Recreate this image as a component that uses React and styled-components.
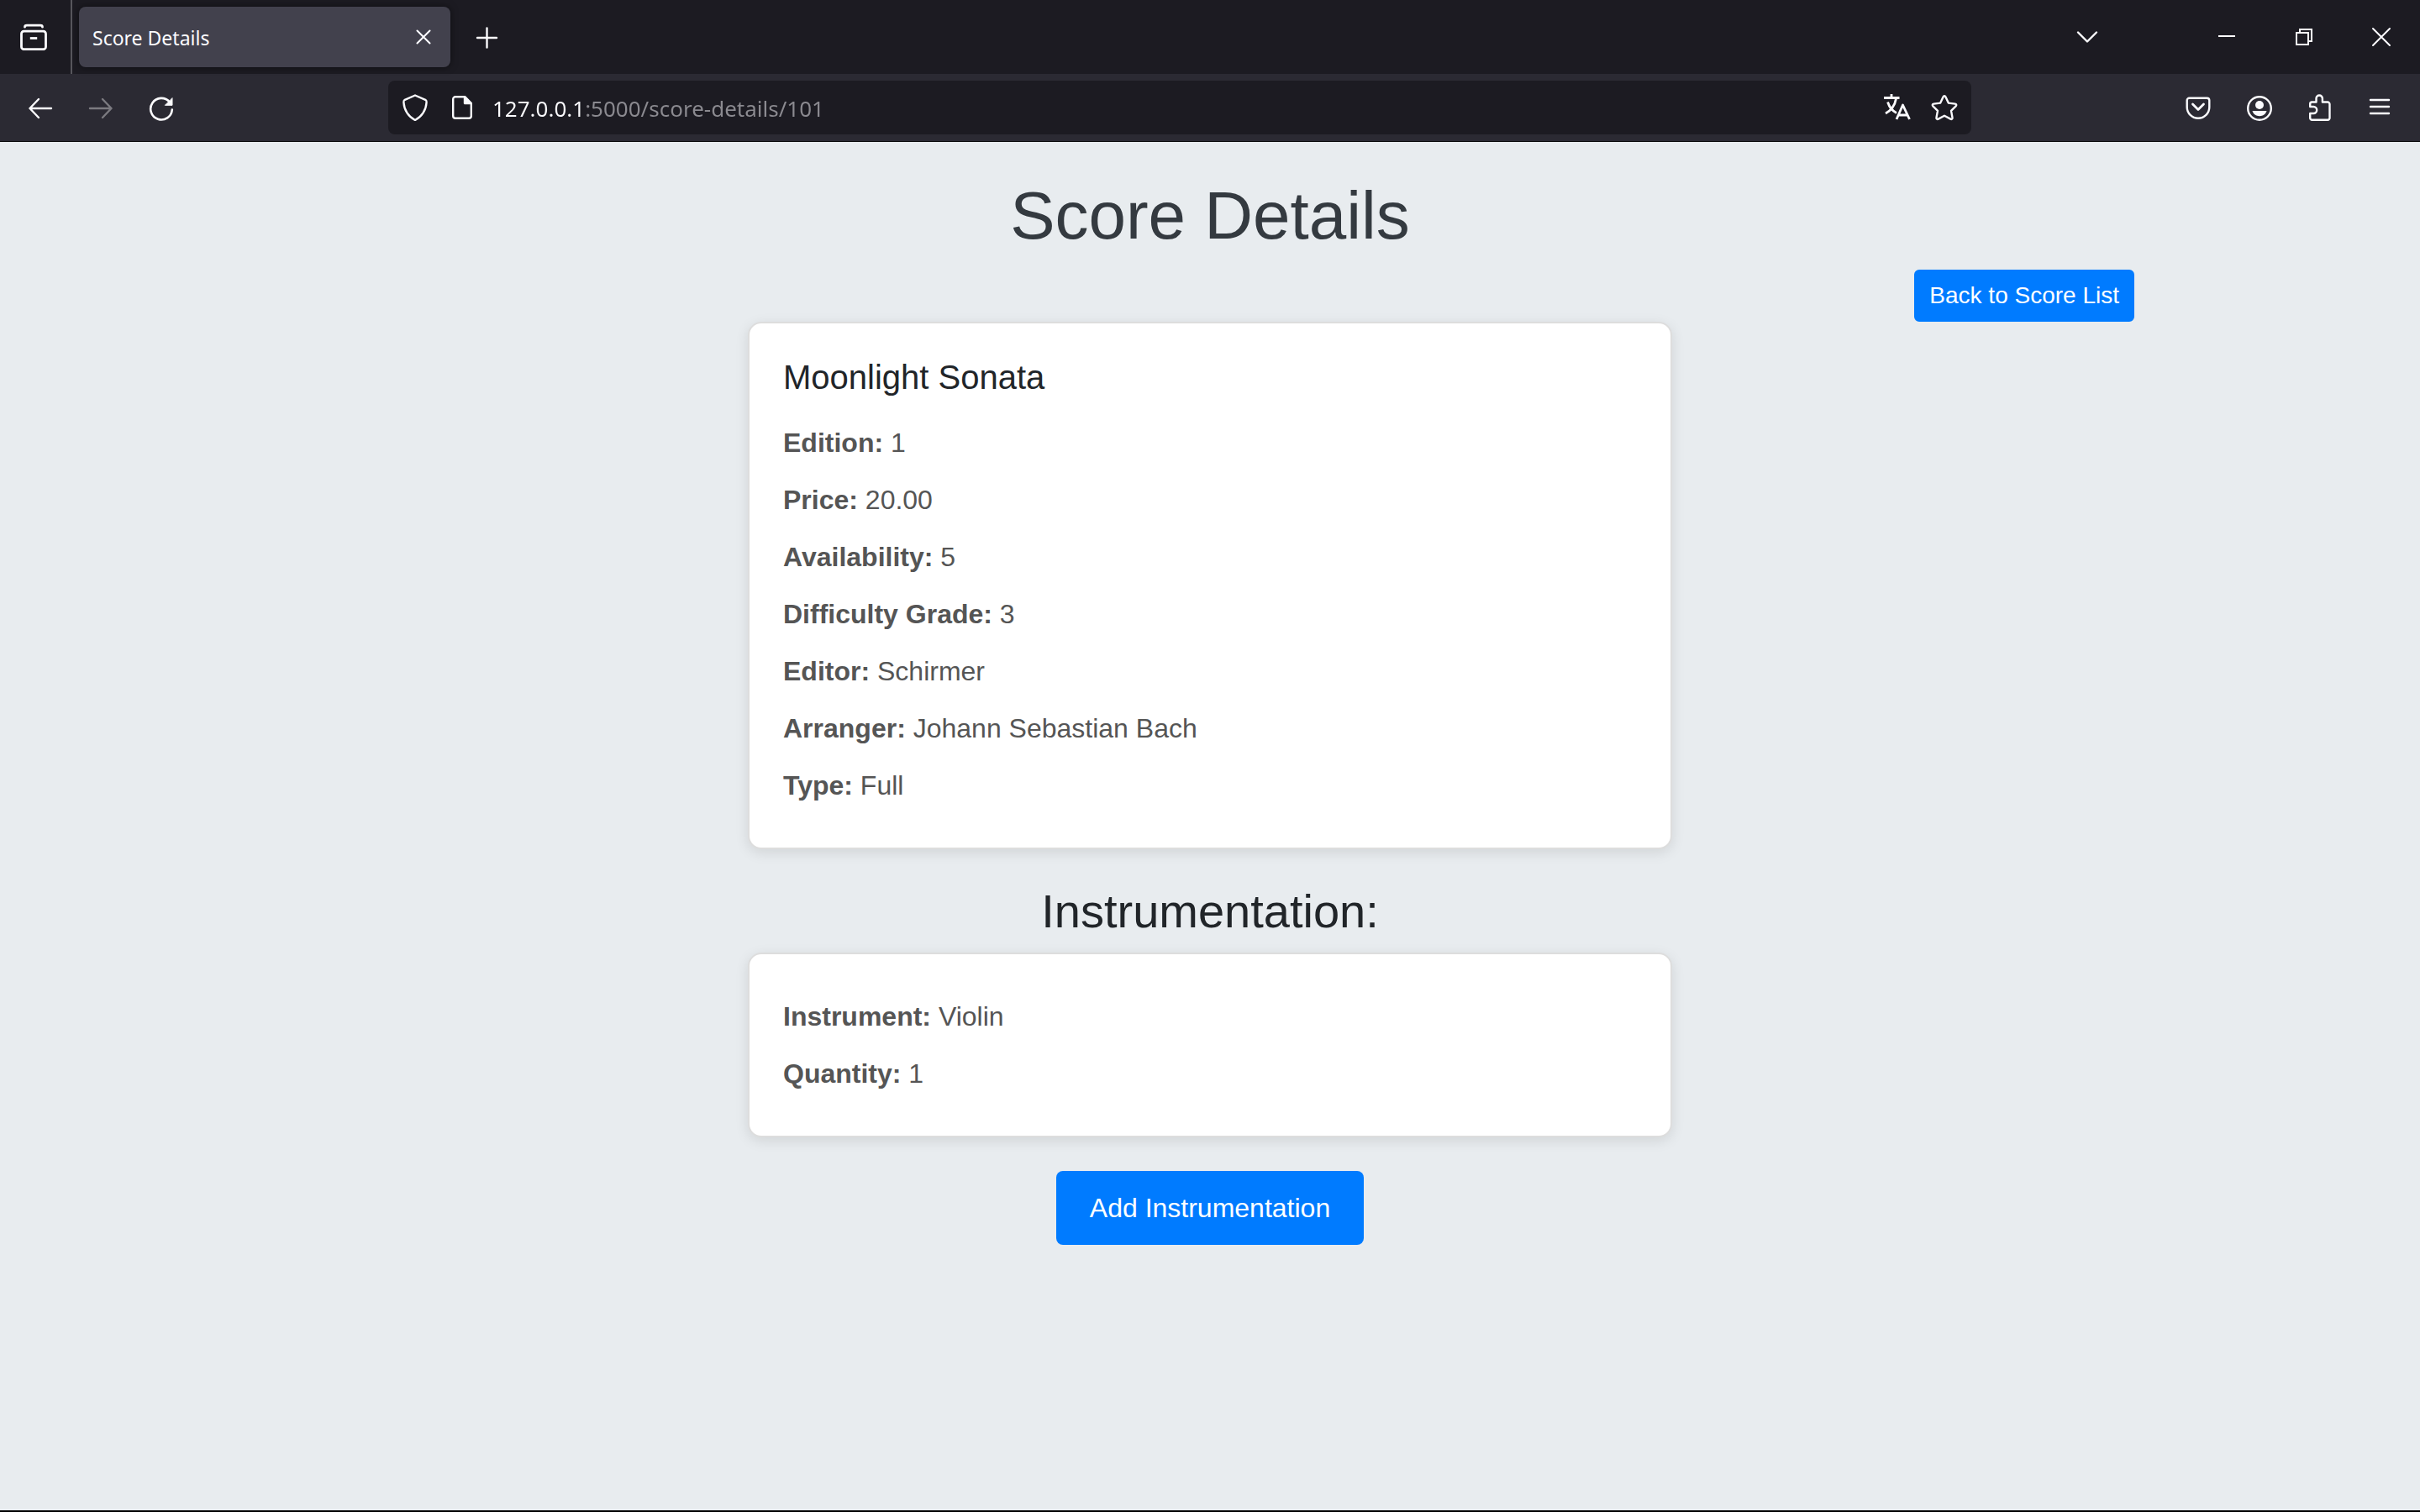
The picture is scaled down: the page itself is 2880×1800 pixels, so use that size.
import React from "react";
import styled, { createGlobalStyle } from "styled-components";

const GlobalStyle = createGlobalStyle`
  *, *::before, *::after { box-sizing: border-box; }
  body {
    margin: 0;
    background: #e8ecef;
    color: #212529;
    font-family: "Liberation Sans", Arial, sans-serif;
    font-size: 32px;
    line-height: 48px;
  }
`;

const Window = styled.div`
  display: flex;
  flex-direction: column;
  min-height: 100vh;
  border-bottom: 2px solid #000;
`;

/* Browser chrome */

const Chrome = styled.header`
  color: #fbfbfe;
  background: #2b2a33;
  border-bottom: 1px solid #0c0c0d;
  font-family: "Noto Sans", "Open Sans", sans-serif;
`;

const TabBar = styled.div`
  display: flex;
  align-items: center;
  height: 88px;
  background: #1c1b22;
`;

const IconButton = styled.button`
  display: flex;
  align-items: center;
  justify-content: center;
  flex: none;
  width: ${(p) => p.$width || 72}px;
  height: ${(p) => p.$height || 64}px;
  padding: 0;
  border: 0;
  background: none;
  color: ${(p) => (p.disabled ? "#7b7a80" : "inherit")};
`;

const FirefoxView = styled.div`
  display: flex;
  align-items: center;
  align-self: stretch;
  padding: 0 8px 0 4px;
  border-right: 2px solid #57565c;
`;

const Tab = styled.div`
  display: flex;
  align-items: center;
  justify-content: space-between;
  width: 442px;
  height: 72px;
  margin: 0 8px;
  padding: 0 16px;
  border-radius: 8px;
  background: #42414d;
  box-shadow: 0 0 8px rgba(0, 0, 0, 0.5);
`;

const TabTitle = styled.span`
  padding-top: 2px;
  font-size: 23px;
  line-height: 32px;
`;

const WindowControls = styled.div`
  display: flex;
  gap: 84px;
  margin-left: auto;
`;

const Controls = styled.div`
  display: flex;
`;

const NavBar = styled.nav`
  display: flex;
  align-items: center;
  height: 80px;
  padding: 0 12px;
`;

const NavGroup = styled.div`
  display: flex;
  flex: none;
`;

const AddressBar = styled.div`
  display: flex;
  align-items: center;
  flex: 1;
  gap: 20px;
  height: 64px;
  margin: 0 234px;
  padding: 0 16px;
  border-radius: 8px;
  background: #1c1b22;
`;

const AddressIcons = styled.div`
  display: flex;
  flex: none;
  gap: 24px;
`;

const AddressInput = styled.input`
  flex: 1;
  min-width: 0;
  height: 42px;
  padding: 2px 0 0;
  border: 0;
  outline: 0;
  font: inherit;
  font-size: 26px;
  line-height: 40px;
  color: transparent;
  background: linear-gradient(to right, #fbfbfe 107px, #8b8a90 107px);
  background-clip: text;
  -webkit-background-clip: text;
`;

const Svg = styled.svg`
  display: block;
  flex: none;
  fill: none;
  stroke: currentColor;
  stroke-width: ${(p) => p.$stroke || 2.4};
  stroke-linecap: round;
  stroke-linejoin: round;
`;

const Icon = ({ stroke, children }) => (
  <Svg width="32" height="32" viewBox="0 0 32 32" $stroke={stroke} aria-hidden="true">
    {children}
  </Svg>
);

/* Page */

const Page = styled.main`
  display: flex;
  flex-direction: column;
  align-items: center;
  width: 100%;
  max-width: 2280px;
  margin: 0 auto;
  padding: 40px;
`;

const PageTitle = styled.h1`
  margin: 0 0 16px;
  color: #343a40;
  font-size: 80px;
  font-weight: 400;
  line-height: 96px;
`;

const SectionTitle = styled.h2`
  margin: 40px 0 16px;
  font-size: 56px;
  font-weight: 400;
  line-height: 67px;
`;

const Card = styled.section`
  width: 50%;
  padding: 40px;
  border: 2px solid #ddd;
  border-radius: 16px;
  background: #fff;
  box-shadow: 0 4px 16px rgba(0, 0, 0, 0.1);
`;

const CardTitle = styled.h2`
  margin: 0 0 20px;
  font-size: 40px;
  font-weight: 400;
  line-height: 48px;
`;

const Detail = styled.p`
  margin: 0;
  padding: 10px 0;
  color: #555;
`;

const BackLink = styled.a`
  align-self: flex-end;
  padding: 8px 16px;
  border: 2px solid #007bff;
  border-radius: 6px;
  background: #007bff;
  color: #fff;
  font-size: 28px;
  line-height: 42px;
  text-decoration: none;
`;

const AddButton = styled.button`
  margin-top: 40px;
  padding: 20px 40px;
  border: 0;
  border-radius: 8px;
  background: #007bff;
  color: #fff;
  font: inherit;
`;

const scoreDetails = [
  ["Edition", "1"],
  ["Price", "20.00"],
  ["Availability", "5"],
  ["Difficulty Grade", "3"],
  ["Editor", "Schirmer"],
  ["Arranger", "Johann Sebastian Bach"],
  ["Type", "Full"],
];

const instrumentation = [
  ["Instrument", "Violin"],
  ["Quantity", "1"],
];

const Details = ({ items }) =>
  items.map(([label, value]) => (
    <Detail key={label}>
      <strong>{label}:</strong> {value}
    </Detail>
  ));

export default function App() {
  return (
    <Window>
      <GlobalStyle />
      <Chrome>
        <TabBar>
          <FirefoxView>
            <IconButton aria-label="Recent browsing">
              <Icon stroke={2.8}>
                <path d="M5.5 4.2C5.5 2.6 6.6 2.2 8 2.2h16c1.400 0 2.500 .4 2.500 2" />
                <rect x="1.500" y="9.200" width="29" height="21.500" rx="3" />
                <path d="M13.200 17.500h5.600" strokeLinecap="square" />
              </Icon>
            </IconButton>
          </FirefoxView>
          <Tab>
            <TabTitle>Score Details</TabTitle>
            <IconButton $width={32} $height={32} aria-label="Close tab">
              <Icon stroke={2}>
                <path d="M8.500 8.500l15 15M23.500 8.500l-15 15" />
              </Icon>
            </IconButton>
          </Tab>
          <IconButton aria-label="New tab">
            <Icon>
              <path d="M15.500 5.500v23M4 17h23" />
            </Icon>
          </IconButton>
          <WindowControls>
            <IconButton aria-label="List all tabs">
              <Icon stroke={2.4}>
                <path d="M5 10.500l11 11 11-11" />
              </Icon>
            </IconButton>
            <Controls>
              <IconButton $width={92} aria-label="Minimize">
                <Icon stroke={2}>
                  <path d="M6 15h20" strokeLinecap="butt" />
                </Icon>
              </IconButton>
              <IconButton $width={92} aria-label="Restore">
                <Icon stroke={2}>
                  <path d="M7 11h14v14H7zM11 11V7h14v14h-4" strokeLinejoin="miter" />
                </Icon>
              </IconButton>
              <IconButton $width={92} aria-label="Close">
                <Icon stroke={2}>
                  <path d="M6 6l20 20M26 6L6 26" />
                </Icon>
              </IconButton>
            </Controls>
          </WindowControls>
        </TabBar>
        <NavBar>
          <NavGroup>
            <IconButton aria-label="Back">
              <Icon stroke={2.4}>
                <path d="M14 6L3.500 17 14 28M3.500 17H29" />
              </Icon>
            </IconButton>
            <IconButton aria-label="Forward" disabled>
              <Icon stroke={2.4}>
                <path d="M18 6l10.500 11L18 28M28.500 17H3" />
              </Icon>
            </IconButton>
            <IconButton aria-label="Reload">
              <Icon stroke={2.6}>
                <path d="M25.800 9.400A12.800 12.800 0 1 0 28.800 18.500" />
                <path d="M29 5v8.300h-8.300z" fill="currentColor" strokeWidth="1" />
              </Icon>
            </IconButton>
          </NavGroup>
          <AddressBar>
            <AddressIcons>
              <Icon stroke={2.4}>
                <path d="M16 1.500L28.800 7.200C29.800 7.700 29.600 9 29.500 10.500C29 19 24 27 16 31C8 27 3 19 2.500 10.500C2.400 9 2.200 7.700 3.200 7.200z" />
              </Icon>
              <Icon stroke={2.4}>
                <path d="M19 3.200H8A2.800 2.800 0 0 0 5.200 6v20A2.800 2.800 0 0 0 8 28.800h16a2.800 2.800 0 0 0 2.800-2.800V11z" />
                <path d="M19 3.200V11h7.800z" fill="currentColor" />
              </Icon>
            </AddressIcons>
            <AddressInput
              aria-label="Address"
              defaultValue="127.0.0.1:5000/score-details/101"
              spellCheck="false"
            />
            <AddressIcons>
              <Icon stroke={2.8}>
                <path d="M0 4.500h18.500M9 0v4" strokeLinecap="butt" />
                <path d="M14.500 5.500C13 13.500 8.500 19.500 2 23M4.500 9.500C6.500 15.500 10 20 15 22.500" strokeLinecap="butt" />
                <path d="M15 30l7.500-17L30.500 30M17.500 25h10.500" strokeLinecap="butt" />
              </Icon>
              <Icon stroke={2.4}>
                <path d="M14.600 3.200c.6-1.300 2.200-1.300 2.800 0l3.400 7.400 7.900 1c1.600.2 2 1.700.9 2.800l-5.600 5.500 1.500 8c.3 1.600-.9 2.500-2.300 1.700L16 25.800l-7.200 3.800c-1.400.8-2.600-.1-2.300-1.700l1.500-8-5.600-5.500c-1.100-1.100-.7-2.600.9-2.800l7.900-1z" />
              </Icon>
            </AddressIcons>
          </AddressBar>
          <NavGroup>
            <IconButton aria-label="Save to Pocket">
              <Icon stroke={2.4}>
                <path d="M5.500 4.700h21a2.800 2.800 0 0 1 2.800 2.800v8a13.300 13.300 0 0 1-26.600 0v-8a2.800 2.800 0 0 1 2.800-2.800z" />
                <path d="M9.500 12l6.500 6.500 6.500-6.500" strokeWidth="2.800" />
              </Icon>
            </IconButton>
            <IconButton aria-label="Account">
              <Icon stroke={2.4}>
                <circle cx="17" cy="17" r="13.800" />
                <circle cx="17" cy="13" r="5" fill="currentColor" stroke="none" />
                <path d="M8.500 20h17c-1 3.800-4.400 6.200-8.500 6.200S9.500 23.800 8.500 20z" fill="currentColor" stroke="none" />
              </Icon>
            </IconButton>
            <IconButton aria-label="Extensions">
              <Icon stroke={2.4}>
                <path d="M7 9.500h5.500V5.200a3.700 3.700 0 0 1 7.400 0v4.300H26a2.500 2.500 0 0 1 2.500 2.500v16.500a2.300 2.300 0 0 1-2.300 2.300H7.500a2.300 2.300 0 0 1-2.300-2.300V23h4a4 4 0 0 0 0-8h-4v-3A2.300 2.300 0 0 1 7 9.500z" />
              </Icon>
            </IconButton>
            <IconButton aria-label="Open menu">
              <Icon stroke={2.4}>
                <path d="M5 7h22M5 15h22M5 23h22" />
              </Icon>
            </IconButton>
          </NavGroup>
        </NavBar>
      </Chrome>
      <Page>
        <PageTitle>Score Details</PageTitle>
        <BackLink href="#scores">Back to Score List</BackLink>
        <Card>
          <CardTitle>Moonlight Sonata</CardTitle>
          <Details items={scoreDetails} />
        </Card>
        <SectionTitle>Instrumentation:</SectionTitle>
        <Card>
          <Details items={instrumentation} />
        </Card>
        <AddButton type="button">Add Instrumentation</AddButton>
      </Page>
    </Window>
  );
}
